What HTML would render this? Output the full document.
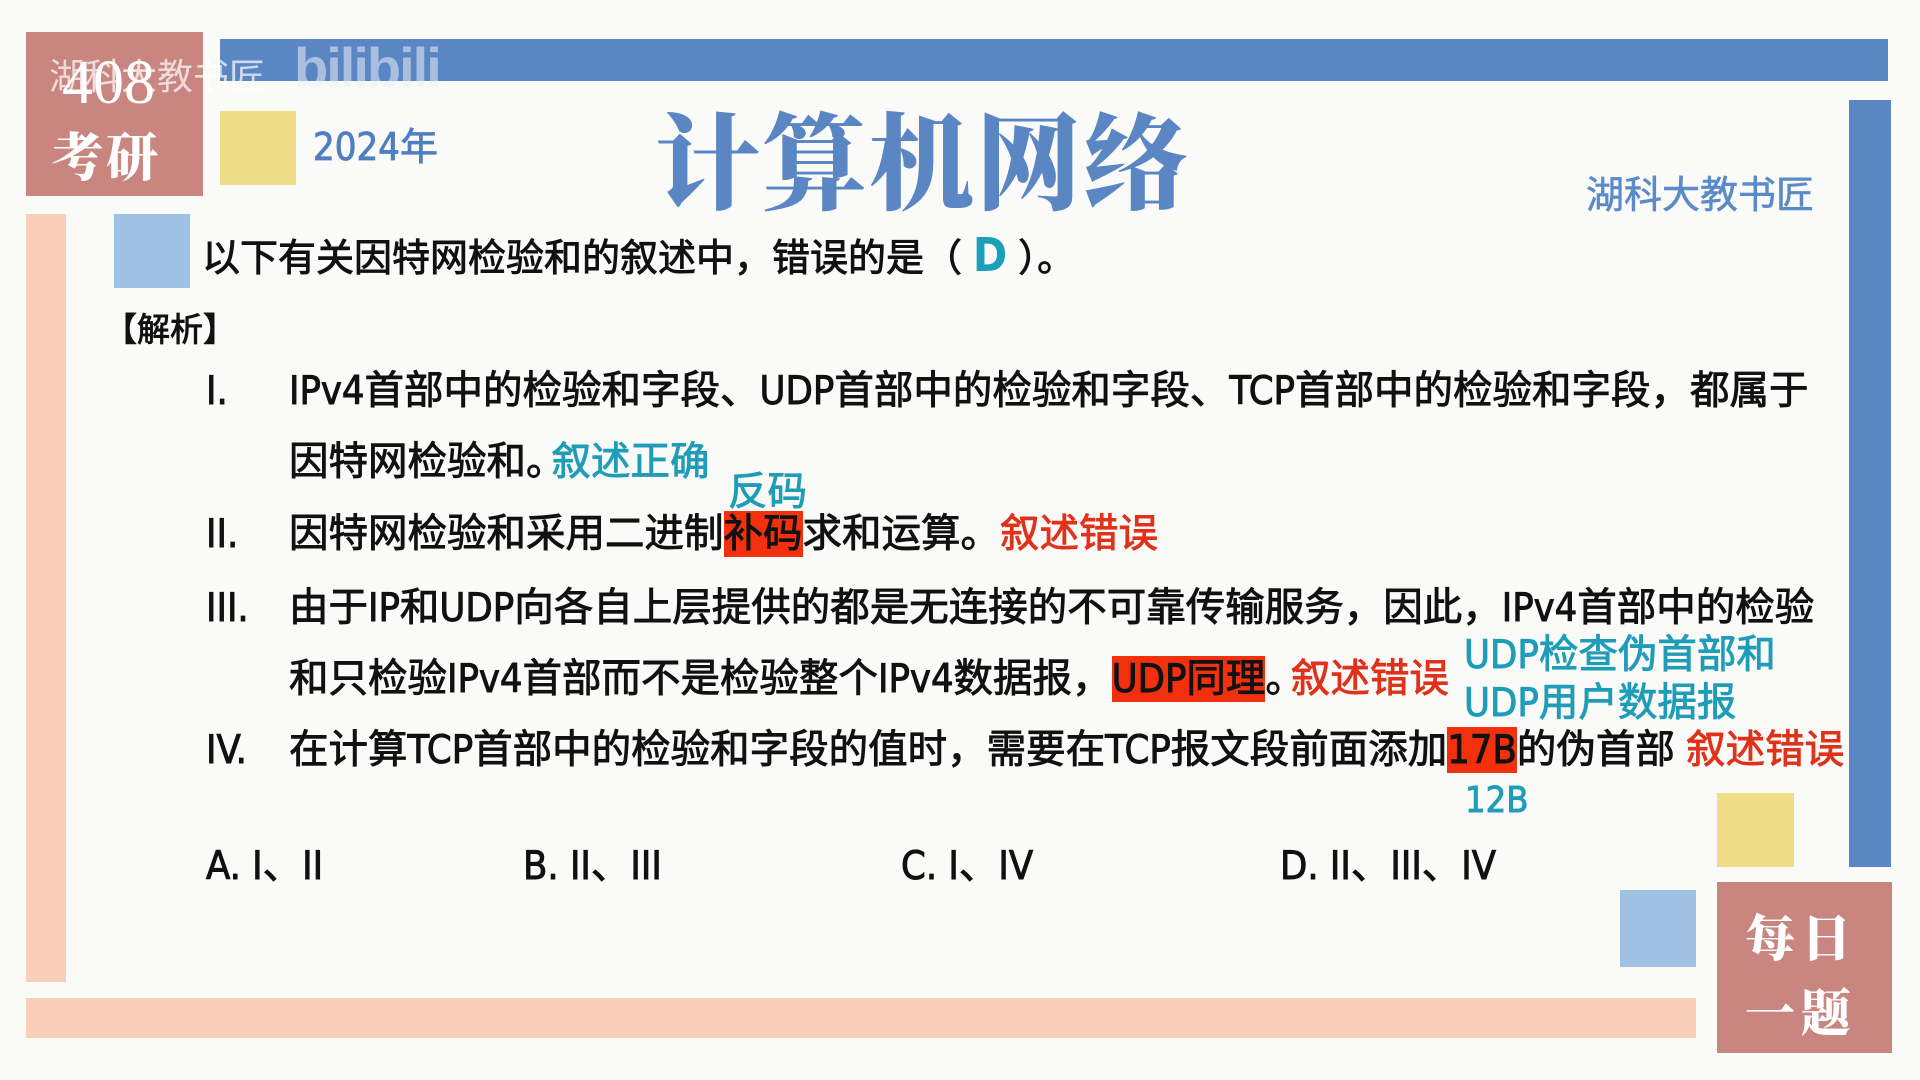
<!DOCTYPE html>
<html><head><meta charset="utf-8"><style>
*{margin:0;padding:0;box-sizing:border-box}
body{width:1920px;height:1080px;background:#fafaf8;position:relative;overflow:hidden;font-family:"DejaVu Sans Condensed","Noto Sans CJK SC",sans-serif;color:#111}
.a{position:absolute;white-space:nowrap;line-height:1}
.t{font-size:39.5px;letter-spacing:0;-webkit-text-stroke:0.9px #111}
.teal{color:#1f9db8;-webkit-text-stroke:0.9px #1f9db8}
.red{color:#e0321a;-webkit-text-stroke:0.9px #e0321a}
.hl{background:#f2300e}
.p{letter-spacing:-14px}
.cal{font-family:"Noto Serif CJK SC",serif;font-weight:900;color:#fff}
</style></head><body>
<div class="a" style="left:26px;top:32px;width:177px;height:164px;background:#c98580"></div>
<div class="a" style="left:220px;top:39px;width:1668px;height:42px;background:#5b86c4"></div>
<div class="a" style="left:220px;top:111px;width:76px;height:74px;background:#f1dd88"></div>
<div class="a" style="left:1849px;top:100px;width:42px;height:767px;background:#5b86c4"></div>
<div class="a" style="left:26px;top:214px;width:40px;height:768px;background:#f8d0ba"></div>
<div class="a" style="left:114px;top:214px;width:76px;height:74px;background:#9fc2e2"></div>
<div class="a" style="left:1717px;top:793px;width:77px;height:74px;background:#f1dd88"></div>
<div class="a" style="left:1620px;top:890px;width:76px;height:77px;background:#9fc2e2"></div>
<div class="a" style="left:1717px;top:882px;width:175px;height:171px;background:#c98580"></div>
<div class="a" style="left:26px;top:998px;width:1670px;height:40px;background:#f8d0ba"></div>

<div class="a" style="left:62px;top:52px;font-family:'Liberation Serif',serif;font-size:62px;color:#fff">408</div>
<div class="a cal" style="left:52px;top:128px;font-size:52px;letter-spacing:2px">考研</div>
<div class="a" style="left:49px;top:56px;font-size:36px;color:rgba(255,255,255,.7);font-family:'Noto Sans CJK SC',sans-serif">湖科大教书匠</div>
<div class="a" style="left:294px;top:40px;font-size:56px;font-weight:bold;color:rgba(235,238,245,.55);font-family:'Liberation Sans',sans-serif;letter-spacing:-2px">bilibili</div>
<div class="a" style="left:313px;top:128px;font-size:38px;color:#4f7fc0;-webkit-text-stroke:0.8px #4f7fc0;font-family:'DejaVu Sans Condensed','Noto Sans CJK SC',sans-serif">2024年</div>
<div class="a" style="left:655px;top:104px;font-size:105px;color:#5b86c4;font-family:'Noto Serif CJK SC',serif;font-weight:900;letter-spacing:2px">计算机网络</div>
<div class="a" style="left:1586px;top:173px;font-size:38px;color:#5b8ac9;-webkit-text-stroke:0.6px #5b8ac9;font-family:'Noto Sans CJK SC',sans-serif">湖科大教书匠</div>
<div class="a cal" style="left:1745px;top:910px;font-size:50px;letter-spacing:6px">每日</div>
<div class="a cal" style="left:1745px;top:985px;font-size:50px;letter-spacing:6px">一题</div>

<div class="a t" style="left:202px;top:232px;font-size:38px">以下有关因特网检验和的叙述中，错误的是（ <span style="color:#1aa0b8;font-weight:bold;font-size:46px;-webkit-text-stroke:0">D</span> ）。</div>
<div class="a t" style="left:104px;top:313px;font-size:33px">【解析】</div>

<div class="a t" style="left:206px;top:372px">I.</div>
<div class="a t" style="left:289px;top:372px">IPv4首部中的检验和字段、UDP首部中的检验和字段、TCP首部中的检验和字段，都属于</div>
<div class="a t" style="left:289px;top:443px">因特网检验和<span class="p">。</span><span class="teal">叙述正确</span></div>
<div class="a t teal" style="left:728px;top:473px">反码</div>
<div class="a t" style="left:206px;top:515px">II.</div>
<div class="a t" style="left:289px;top:515px">因特网检验和采用二进制<span class="hl">补码</span>求和运算。<span class="red">叙述错误</span></div>
<div class="a t" style="left:206px;top:589px">III.</div>
<div class="a t" style="left:289px;top:589px">由于IP和UDP向各自上层提供的都是无连接的不可靠传输服务，因此，IPv4首部中的检验</div>
<div class="a t" style="left:289px;top:660px">和只检验IPv4首部而不是检验整个IPv4数据报，<span class="hl">UDP同理</span><span class="p">。</span><span class="red">叙述错误</span></div>
<div class="a t teal" style="left:1464px;top:636px">UDP检查伪首部和</div>
<div class="a t teal" style="left:1464px;top:684px">UDP用户数据报</div>
<div class="a t" style="left:206px;top:731px">IV.</div>
<div class="a t" style="left:289px;top:731px">在计算TCP首部中的检验和字段的值时，需要在TCP报文段前面添加<span class="hl">17B</span>的伪首部 <span class="red">叙述错误</span></div>
<div class="a t teal" style="left:1465px;top:783px;font-size:36px">12B</div>

<div class="a t" style="left:206px;top:847px">A. I、II</div>
<div class="a t" style="left:523px;top:847px">B. II、III</div>
<div class="a t" style="left:901px;top:847px">C. I、IV</div>
<div class="a t" style="left:1280px;top:847px">D. II、III、IV</div>
</body></html>
